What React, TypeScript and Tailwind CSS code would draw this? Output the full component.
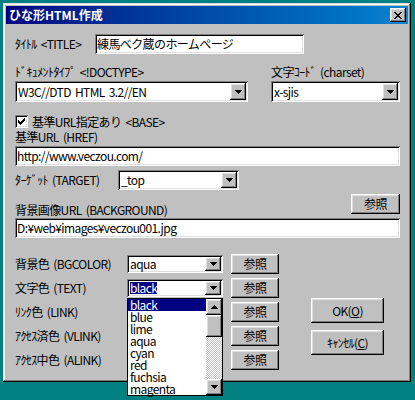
import React from "react";

const sunken =
  "shadow-[inset_1px_1px_0_#808080,inset_-1px_-1px_0_#ffffff,inset_2px_2px_0_#000000,inset_-2px_-2px_0_#dfdfdf]";
const raised =
  "shadow-[inset_-1px_-1px_0_#000000,inset_1px_1px_0_#ffffff,inset_-2px_-2px_0_#808080,inset_2px_2px_0_#dfdfdf]";

function Pix({ rows, color = "#000" }: { rows: string[]; color?: string }) {
  return (
    <svg
      width={rows[0].length}
      height={rows.length}
      shapeRendering="crispEdges"
      className="block"
    >
      {rows.flatMap((r, y) =>
        r.split("").map((c, x) =>
          c === "#" ? (
            <rect key={`${x}-${y}`} x={x} y={y} width={1} height={1} fill={color} />
          ) : null
        )
      )}
    </svg>
  );
}

const DOWN = ["#######", ".#####.", "..###..", "...#..."];
const UP = ["...#...", "..###..", ".#####.", "#######"];
const CLOSE = [
  "##....##",
  ".##..##.",
  "..####..",
  "...##...",
  "..####..",
  ".##..##.",
  "##....##",
];
const CHECK = [
  "......#",
  ".....##",
  "#...###",
  "##.###.",
  "#####..",
  ".###...",
  "..#....",
];

function ArrowBtn({ up = false, className = "" }: { up?: boolean; className?: string }) {
  return (
    <div
      className={`${raised} bg-[#c0c0c0] flex items-center justify-center w-[16px] shrink-0 ${className}`}
    >
      <Pix rows={up ? UP : DOWN} />
    </div>
  );
}

function Combo({ value, className = "" }: { value?: React.ReactNode; className?: string }) {
  return (
    <div className={`${sunken} bg-white flex items-stretch p-[2px] ${className}`}>
      <div className="flex-1 flex items-center min-w-0 pl-[1px] text-[12px] leading-[14px] whitespace-nowrap">
        {value}
      </div>
      <ArrowBtn />
    </div>
  );
}

function Field({ children, className = "" }: { children?: React.ReactNode; className?: string }) {
  return (
    <div
      className={`${sunken} bg-white flex items-center px-[2px] text-[12px] leading-[14px] whitespace-nowrap ${className}`}
    >
      {children}
    </div>
  );
}

function Btn({ children, className = "" }: { children: React.ReactNode; className?: string }) {
  return (
    <div
      className={`${raised} bg-[#c0c0c0] flex items-center justify-center text-[12px] leading-[14px] whitespace-nowrap ${className}`}
    >
      {children}
    </div>
  );
}

const colorRows: { label: string; value?: React.ReactNode }[] = [
  { label: "背景色 (BGCOLOR)", value: "aqua" },
  {
    label: "文字色 (TEXT)",
    value: <span className="bg-[#000080] text-white inline-block leading-[12px]">black</span>,
  },
  { label: "ﾘﾝｸ色 (LINK)" },
  { label: "ｱｸｾｽ済色 (VLINK)" },
  { label: "ｱｸｾｽ中色 (ALINK)" },
];

const listItems = ["black", "blue", "lime", "aqua", "cyan", "red", "fuchsia", "magenta"];

export default function App() {
  return (
    <div className="relative w-[415px] h-[400px] overflow-hidden bg-[#008080] pt-[3px] pl-[3px] font-['Noto_Sans_CJK_JP','Noto_Sans',sans-serif] tracking-[-0.6px] [word-spacing:2px] text-black">
      <div
        className={`w-[408px] h-[379px] bg-[#c0c0c0] p-[3px] flex flex-col shadow-[inset_-1px_-1px_0_#000000,inset_1px_1px_0_#dfdfdf,inset_-2px_-2px_0_#808080,inset_2px_2px_0_#ffffff]`}
      >
        {/* Title bar */}
        <div className="h-[18px] shrink-0 flex items-center justify-between pl-[3px] pr-[2px] bg-gradient-to-r from-[#000080] to-[#1084d0]">
          <span className="text-white font-bold text-[12px] leading-[14px] tracking-normal">
            ひな形HTML作成
          </span>
          <div className={`${raised} bg-[#c0c0c0] w-[16px] h-[14px] flex items-center justify-center`}>
            <Pix rows={CLOSE} />
          </div>
        </div>

        {/* Content */}
        <div className="flex flex-col pl-[9px] pr-[8px] text-[12px] leading-[14px]">
          {/* Title */}
          <div className="mt-[10px] h-[20px] flex items-center">
            <span className="w-[80px] shrink-0">ﾀｲﾄﾙ &lt;TITLE&gt;</span>
            <Field className="w-[209px] h-[20px]">練馬ベク蔵のホームページ</Field>
          </div>

          {/* Doctype / charset */}
          <div className="mt-[11px] flex">
            <div className="w-[233px] flex flex-col">
              <span className="h-[14px]">ﾄﾞｷｭﾒﾝﾄﾀｲﾌﾟ &lt;!DOCTYPE&gt;</span>
              <Combo className="mt-[2px] h-[21px]" value="W3C//DTD HTML 3.2//EN" />
            </div>
            <div className="ml-[23px] flex-1 flex flex-col">
              <span className="h-[14px]">文字ｺｰﾄﾞ (charset)</span>
              <Combo className="mt-[2px] h-[21px]" value="x-sjis" />
            </div>
          </div>

          {/* Checkbox */}
          <div className="mt-[13px] h-[13px] flex items-center">
            <div className={`${sunken} bg-white w-[13px] h-[13px] shrink-0 flex items-center justify-center`}>
              <Pix rows={CHECK} />
            </div>
            <span className="ml-[4px] leading-[13px]">基準URL指定あり &lt;BASE&gt;</span>
          </div>

          {/* HREF */}
          <span className="mt-[2px] h-[14px]">基準URL (HREF)</span>
          <Field className="mt-[2px] h-[20px]">http://www.veczou.com/</Field>

          {/* Target */}
          <div className="mt-[4px] h-[20px] flex items-center">
            <span className="w-[103px] shrink-0">ﾀｰｹﾞｯﾄ (TARGET)</span>
            <Combo className="w-[121px] h-[20px]" value="_top" />
          </div>

          {/* Background */}
          <div className="mt-[4px] h-[23px] flex justify-between">
            <span className="self-end h-[14px]">背景画像URL (BACKGROUND)</span>
            <Btn className="self-start w-[49px] h-[20px]">参照</Btn>
          </div>
          <Field className="mt-[1px] h-[20px]">D:¥web¥images¥veczou001.jpg</Field>

          {/* Colors + OK/Cancel */}
          <div className="mt-[16px] flex">
            <div className="w-[264px] flex flex-col gap-[4px]">
              {colorRows.map((r) => (
                <div key={r.label} className="h-[20px] flex items-center">
                  <span className="w-[112px] shrink-0">{r.label}</span>
                  <Combo className="w-[96px] h-[18px]" value={r.value} />
                  <Btn className="ml-[8px] w-[48px] h-[20px]">参照</Btn>
                </div>
              ))}
            </div>
            <div className="ml-[32px] pt-[44px] flex flex-col">
              <Btn className="w-[73px] h-[25px]">
                OK(<span className="underline">O</span>)
              </Btn>
              <Btn className="mt-[7px] w-[73px] h-[25px]">
                ｷｬﾝｾﾙ(<span className="underline">C</span>)
              </Btn>
            </div>
          </div>
        </div>
      </div>

      {/* Open dropdown list */}
      <div className="absolute left-[127px] top-[298px] w-[96px] h-[98px] bg-white border border-black flex text-[12px]">
        <div className="flex-1 flex flex-col min-w-0">
          {listItems.map((it, i) => (
            <div
              key={it}
              className={`h-[12px] leading-[12px] pl-[2px] whitespace-nowrap ${
                i === 0 ? "bg-[#000080] text-white" : ""
              }`}
            >
              {it}
            </div>
          ))}
        </div>
        <div className="w-[16px] flex flex-col">
          <ArrowBtn up className="h-[16px]" />
          <div className={`${raised} bg-[#c0c0c0] h-[22px] shrink-0`} />
          <div className="flex-1 bg-[repeating-conic-gradient(#ffffff_0_25%,#c0c0c0_0_50%)] bg-[length:2px_2px]" />
          <ArrowBtn className="h-[16px]" />
        </div>
      </div>
    </div>
  );
}
